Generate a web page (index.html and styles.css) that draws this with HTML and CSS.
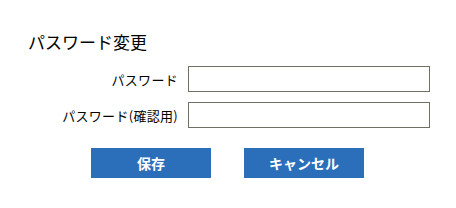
FILE: index.html
```html
<!DOCTYPE html>
<html lang="ja">
  <head>
    <meta charset="UTF-8" />
    <title>パスワード変更</title>
    <link rel="stylesheet" href="styles.css">
  </head>
  <body>
    <form class="pwForm">
      <h2 class="pwForm__title">パスワード変更</h2>
      <div class="pwForm__row">
        <label class="pwForm__label" for="pw">パスワード</label>
        <input class="pwForm__input" type="password" id="pw" />
      </div>
      <div class="pwForm__row">
        <label class="pwForm__label" for="pw2">パスワード(確認用)</label>
        <input class="pwForm__input" type="password" id="pw2" />
      </div>
      <div class="pwForm__buttons">
        <button type="submit" class="pwForm__btn">保存</button>
        <button type="button" class="pwForm__btn">キャンセル</button>
      </div>
    </form>
  </body>
</html>
```

FILE: styles.css
```css
body {
  margin: 0;
  background: #ffffff;
  font-family: "Noto Sans CJK JP", "Noto Sans", sans-serif;
  color: #000000;
}

.pwForm {
  padding: 30px 0 0 28px;
}

.pwForm__title {
  font-size: 17px;
  font-weight: normal;
  line-height: 24px;
  margin: 0 0 12px 0;
}

.pwForm__row {
  display: flex;
  align-items: center;
  margin-bottom: 10px;
}

.pwForm__label {
  width: 150px;
  text-align: right;
  font-size: 13px;
  letter-spacing: 0.3px;
  margin-right: 10px;
}

.pwForm__input {
  box-sizing: border-box;
  width: 242px;
  height: 26px;
  border: 1px solid #6f6f63;
  margin: 0;
  padding: 2px 4px;
}

.pwForm__buttons {
  display: flex;
  gap: 33px;
  margin: 20px 0 0 63px;
}

.pwForm__btn {
  width: 120px;
  height: 30px;
  border: none;
  background: #2b6fba;
  color: #ffffff;
  font-family: "Noto Sans CJK JP", "Noto Sans", sans-serif;
  font-size: 14px;
  font-weight: bold;
  padding: 0;
}
```
